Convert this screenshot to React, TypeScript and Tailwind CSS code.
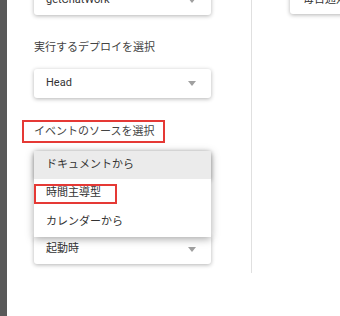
import React from 'react';

const Arrow = () => (
  <span className="w-0 h-0 border-l-[4px] border-r-[4px] border-t-[5px] border-l-transparent border-r-transparent border-t-[#a0a0a0]" />
);

const Select = ({ value, className = '' }: { value: string; className?: string }) => (
  <div
    className={`h-[29px] flex items-center justify-between pl-[12px] pr-[15px] bg-white rounded-[3px] shadow-[0_1px_4px_rgba(0,0,0,0.3)] ${className}`}
  >
    <span className="text-[11px] text-[#333]">{value}</span>
    <Arrow />
  </div>
);

const App = () => {
  return (
    <div
      className="w-[340px] h-[316px] overflow-hidden bg-white flex"
      style={{ fontFamily: 'Roboto, "Noto Sans CJK JP", sans-serif' }}
    >
      <div className="w-[7px] shrink-0 bg-[#595959]" />

      {/* left column */}
      <div className="w-[177px] shrink-0 ml-[27px] mt-[-14px] flex flex-col">
        <Select value="getChatWork" />

        <div className="mt-[25px] h-[16px] leading-[16px] text-[11px] text-[#444]">
          実行するデプロイを選択
        </div>
        <Select value="Head" className="mt-[13px]" />

        <div className="relative mt-[26px] h-[16px] leading-[16px] text-[11px] text-[#444]">
          イベントのソースを選択
          <span className="absolute left-[-12px] top-[-4px] w-[143px] h-[23px] border-2 border-[#e53935]" />
        </div>

        <div className="relative mt-[11px]">
          {/* select + next label sit under the open menu */}
          <div className="h-[29px] bg-white rounded-[3px] shadow-[0_1px_4px_rgba(0,0,0,0.3)]" />
          <div className="mt-[20px] h-[16px]" />
          <Select value="起動時" className="mt-[19px]" />

          {/* open dropdown */}
          <div className="absolute top-0 left-0 w-full z-10 bg-white shadow-[0_2px_8px_rgba(0,0,0,0.35)] text-[11px] text-[#333]">
            <div className="h-[28px] flex items-center pl-[12px] bg-[#ebebeb]">ドキュメントから</div>
            <div className="relative h-[29px] flex items-center pl-[12px]">
              時間主導型
              <span className="absolute left-0 top-[5px] w-[83px] h-[20px] border-2 border-[#e53935]" />
            </div>
            <div className="h-[29px] flex items-center pl-[12px]">カレンダーから</div>
          </div>
        </div>
      </div>

      {/* divider */}
      <div className="ml-[40px] w-px h-[273px] shrink-0 bg-[#e0e0e0]" />

      {/* right column */}
      <div className="ml-[38px] mt-[-14px] flex-1">
        <div className="h-[28px] w-[80px] flex items-center pl-[13px] bg-white rounded-[3px] shadow-[0_1px_4px_rgba(0,0,0,0.3)]">
          <span className="text-[11px] text-[#333] whitespace-nowrap">毎日通知</span>
        </div>
      </div>
    </div>
  );
};

export default App;
